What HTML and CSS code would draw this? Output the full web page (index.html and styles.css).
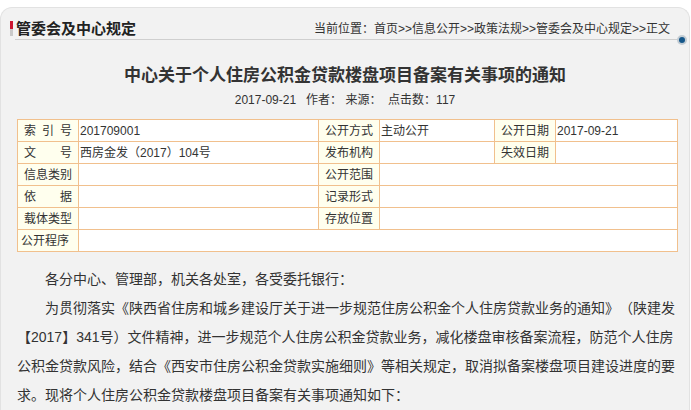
FILE: index.html
```html
<!DOCTYPE html>
<html lang="zh-CN">
<head>
<meta charset="utf-8">
<title>管委会及中心规定</title>
<link rel="stylesheet" href="styles.css">
</head>
<body>
<div class="panel">
  <div class="head">
    <span class="mark"></span>
    <div class="headline">
      <h2 class="section-title">管委会及中心规定</h2>
      <div class="crumbs">当前位置：首页&gt;&gt;信息公开&gt;&gt;政策法规&gt;&gt;管委会及中心规定&gt;&gt;正文</div>
      <span class="dot"></span>
    </div>
  </div>

  <h1 class="title">中心关于个人住房公积金贷款楼盘项目备案有关事项的通知</h1>
  <div class="meta">2017-09-21&nbsp;&nbsp;&nbsp;作者：&nbsp;来源：&nbsp;&nbsp;点击数：117</div>

  <table class="info">
    <colgroup>
      <col class="c-lab"><col class="c-v1"><col class="c-lab"><col class="c-v2"><col class="c-lab"><col class="c-v3">
    </colgroup>
    <tr>
      <td class="lab">索引号</td><td class="val">201709001</td>
      <td class="lab">公开方式</td><td class="val">主动公开</td>
      <td class="lab">公开日期</td><td class="val">2017-09-21</td>
    </tr>
    <tr>
      <td class="lab">文号</td><td class="val">西房金发（2017）104号</td>
      <td class="lab">发布机构</td><td class="val"></td>
      <td class="lab">失效日期</td><td class="val"></td>
    </tr>
    <tr>
      <td class="lab">信息类别</td><td class="val"></td>
      <td class="lab">公开范围</td><td class="val" colspan="3"></td>
    </tr>
    <tr>
      <td class="lab">依据</td><td class="val"></td>
      <td class="lab">记录形式</td><td class="val" colspan="3"></td>
    </tr>
    <tr>
      <td class="lab">载体类型</td><td class="val"></td>
      <td class="lab">存放位置</td><td class="val" colspan="3"></td>
    </tr>
    <tr>
      <td class="lab lab-left">公开程序</td><td class="val" colspan="5"></td>
    </tr>
  </table>

  <div class="content">
    <p>各分中心、管理部，机关各处室，各受委托银行：</p>
    <p>为贯彻落实《陕西省住房和城乡建设厅关于进一步规范住房公积金个人住房贷款业务的通知》（陕建发【2017】341号）文件精神，进一步规范个人住房公积金贷款业务，减化楼盘审核备案流程，防范个人住房公积金贷款风险，结合《西安市住房公积金贷款实施细则》等相关规定，取消拟备案楼盘项目建设进度的要求。现将个人住房公积金贷款楼盘项目备案有关事项通知如下：</p>
  </div>
</div>
</body>
</html>
```

FILE: styles.css
```css
html, body {
  margin: 0;
  padding: 0;
  background: #ffffff;
  overflow: hidden;
}

body {
  font-family: "Liberation Sans", "Noto Sans CJK SC", sans-serif;
  color: #333333;
  text-spacing-trim: space-all;
}

.panel {
  box-sizing: border-box;
  width: 690px;
  height: 403px;
  margin-top: 7px;
  background: #f2f2f2;
  border: 1px solid #e2e2e2;
  border-bottom: 0;
  border-radius: 12px 12px 0 0;
  overflow: hidden;
}

.head {
  display: flex;
  align-items: flex-start;
  padding: 12px 7px 0 9px;
}

.mark {
  width: 3px;
  height: 15px;
  margin-top: 1px;
  background: linear-gradient(#cc1530 0, #cc1530 55%, #c9c9c9 55%, #c9c9c9 100%);
}

.headline {
  position: relative;
  flex: 1;
  margin-left: 2px;
  display: flex;
  justify-content: space-between;
  align-items: center;
  height: 18px;
  padding: 0 12px 1px 1px;
  border-bottom: 1px solid #cfcfcf;
}

.section-title {
  margin: 0;
  font-size: 15px;
  font-weight: bold;
  line-height: 18px;
  color: #222222;
}

.crumbs {
  font-size: 12px;
  line-height: 18px;
  color: #333333;
}

.dot {
  position: absolute;
  right: -5px;
  bottom: -6px;
  width: 6px;
  height: 6px;
  border-radius: 50%;
  background: #15578a;
  border: 2px solid #c3ccd3;
}

.title {
  margin: 24px 0 0;
  font-size: 17px;
  font-weight: bold;
  line-height: 24px;
  text-align: center;
  color: #333333;
}

.meta {
  margin-top: 2px;
  font-size: 12px;
  line-height: 20px;
  text-align: center;
  color: #333333;
}

.info {
  table-layout: fixed;
  border-collapse: collapse;
  width: 660px;
  margin: 9px 0 0 16px;
  font-size: 12px;
}

.c-lab { width: 61px; }
.c-v1 { width: 240px; }
.c-v2 { width: 115px; }
.c-v3 { width: 122px; }

.info td {
  border: 1px solid #f1c08d;
  height: 21px;
  padding: 0;
  line-height: 14px;
  vertical-align: middle;
  white-space: nowrap;
  overflow: hidden;
}

.info .lab {
  background: #ffffee;
  padding: 0 6px 0 6px;
  text-align: justify;
  text-align-last: justify;
  text-justify: inter-character;
}

.info .lab-left {
  padding-left: 3px;
  text-align: left;
  text-align-last: left;
}

.info .val {
  background: #ffffff;
  padding-left: 1px;
}

.content {
  width: 659px;
  margin: 13px 0 0 16px;
  font-size: 14px;
  line-height: 29px;
  color: #333333;
}

.content p {
  margin: 0;
  text-indent: 28px;
}
```
